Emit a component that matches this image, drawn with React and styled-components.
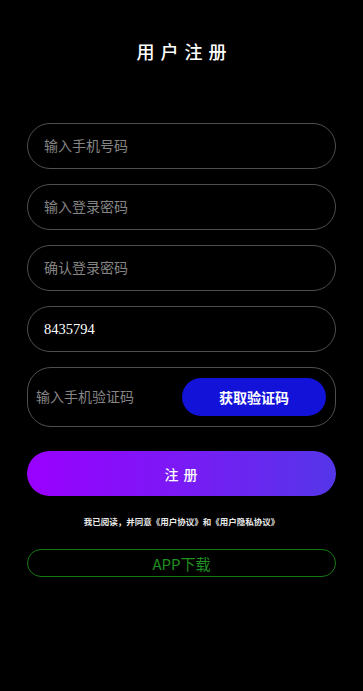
import React, { useState } from 'react'
import styled, { createGlobalStyle } from 'styled-components'

const GlobalStyle = createGlobalStyle`
  html, body {
    margin: 0;
    padding: 0;
    background-color: #000;
    font-family: "Noto Sans CJK SC", "Noto Sans", sans-serif;
  }
`

const Page = styled.div`
  min-height: 691px;
  background-color: #000;
  padding: 0 27px;
  box-sizing: border-box;
`

const Title = styled.h1`
  margin: 0;
  padding-top: 38px;
  padding-left: 6px;
  height: 123px;
  box-sizing: border-box;
  text-align: center;
  color: #fff;
  font-size: 18px;
  font-weight: 500;
  letter-spacing: 6px;
  line-height: 26px;
`

const Form = styled.div`
  display: flex;
  flex-direction: column;
  gap: 15px;
`

const Field = styled.input`
  width: 100%;
  height: 46px;
  box-sizing: border-box;
  padding: 0 16px;
  background: transparent;
  border: 1px solid #4f4f4f;
  border-radius: 23px;
  color: #fff;
  font-family: "Liberation Serif", serif;
  font-size: 14.5px;
  outline: none;

  &::placeholder {
    color: #858585;
    font-family: "Noto Sans CJK SC", sans-serif;
    font-size: 14px;
  }
`

const CodeRow = styled.div`
  display: flex;
  align-items: center;
  justify-content: space-between;
  height: 60px;
  box-sizing: border-box;
  padding: 0 9px 0 8px;
  border: 1px solid #4f4f4f;
  border-radius: 24px;
`

const CodeInput = styled.input`
  flex: 1;
  min-width: 0;
  background: transparent;
  border: none;
  outline: none;
  color: #fff;
  font-size: 14px;
  padding: 0;

  &::placeholder {
    color: #858585;
    font-family: "Noto Sans CJK SC", sans-serif;
    font-size: 14px;
  }
`

const CodeButton = styled.button`
  width: 144px;
  height: 38px;
  border: none;
  border-radius: 19px;
  background-color: #1212d8;
  color: #fff;
  font-family: "Noto Sans CJK SC", sans-serif;
  font-size: 14px;
  font-weight: 700;
  cursor: pointer;
`

const SubmitButton = styled.button`
  margin-top: 24px;
  width: 100%;
  height: 45px;
  border: none;
  border-radius: 23px;
  background: linear-gradient(90deg, #9a00ff 0%, #7a1af5 50%, #5436e8 100%);
  color: #fff;
  font-family: "Noto Sans CJK SC", sans-serif;
  font-size: 14px;
  font-weight: 500;
  letter-spacing: 1px;
  cursor: pointer;
`

const Agreement = styled.p`
  margin: 19px 0 0;
  text-align: center;
  color: #e8e8e8;
  font-size: 8.5px;
  font-weight: 700;
  line-height: 12px;
`

const DownloadButton = styled.button`
  margin-top: 22px;
  width: 100%;
  height: 28px;
  box-sizing: border-box;
  background: transparent;
  border: 1px solid #137a13;
  border-radius: 14px;
  color: #1f8f1f;
  font-family: "Noto Sans CJK SC", "Noto Sans", sans-serif;
  font-size: 15px;
  cursor: pointer;
`

export default function App() {
  const [phone, setPhone] = useState('')
  const [pwd, setPwd] = useState('')
  const [pwd2, setPwd2] = useState('')
  const [invite, setInvite] = useState('8435794')
  const [code, setCode] = useState('')

  return (
    <>
      <GlobalStyle />
      <Page>
        <Title>用户注册</Title>
        <Form>
          <Field placeholder="输入手机号码" value={phone} onChange={(e) => setPhone(e.target.value)} />
          <Field type="password" placeholder="输入登录密码" value={pwd} onChange={(e) => setPwd(e.target.value)} />
          <Field type="password" placeholder="确认登录密码" value={pwd2} onChange={(e) => setPwd2(e.target.value)} />
          <Field value={invite} onChange={(e) => setInvite(e.target.value)} />
          <CodeRow>
            <CodeInput placeholder="输入手机验证码" value={code} onChange={(e) => setCode(e.target.value)} />
            <CodeButton>获取验证码</CodeButton>
          </CodeRow>
        </Form>
        <SubmitButton>注 册</SubmitButton>
        <Agreement>我已阅读，并同意《用户协议》和《用户隐私协议》</Agreement>
        <DownloadButton>APP下载</DownloadButton>
      </Page>
    </>
  )
}
